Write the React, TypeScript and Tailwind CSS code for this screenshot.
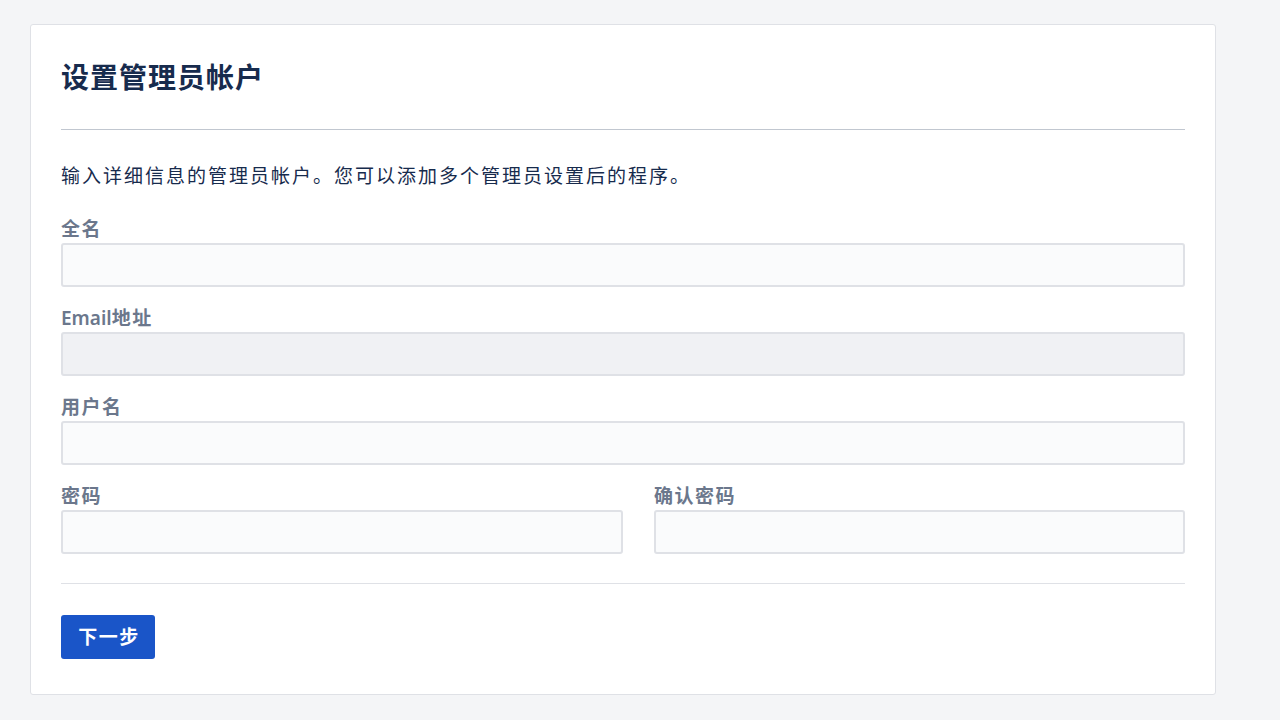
const FONT = {
  fontFamily:
    '-apple-system, "Noto Sans", "Noto Sans CJK SC", "Liberation Sans", sans-serif',
};

function Field({
  label,
  latin,
  disabled,
  className = "",
}: {
  label: string;
  latin?: string;
  disabled?: boolean;
  className?: string;
}) {
  return (
    <div className={className}>
      <label className="block text-[19px] font-semibold leading-6 tracking-[1.5px] text-[#6b778c]">
        {latin && <span className="tracking-normal">{latin}</span>}
        {label}
      </label>
      <input
        type="text"
        disabled={disabled}
        className={
          "mt-0.5 block h-[44px] w-full rounded-[3px] border-2 border-[#dfe1e6] outline-none " +
          (disabled ? "bg-[#f0f1f4]" : "bg-[#fafbfc]")
        }
      />
    </div>
  );
}

export default function App() {
  return (
    <div className="min-h-[720px] bg-[#f4f5f7] pl-[30px] pr-[64px] pt-[24px]" style={FONT}>
      <div className="w-[1186px] rounded-[3px] border border-[#dfe1e6] bg-white px-[30px] pb-[35px] pt-[28px]">
        <h1 className="text-[28px] font-bold leading-[48px] tracking-[1px] text-[#172b4d]">
          设置管理员帐户
        </h1>
        <div className="mt-[28px] h-px bg-[#c1c7d0]" />

        <p className="mt-[34px] text-[19px] leading-6 tracking-[2px] text-[#172b4d]">
          输入详细信息的管理员帐户。您可以添加多个管理员设置后的程序。
        </p>

        <Field label="全名" className="mt-[29px]" />
        <Field latin="Email" label="地址" disabled className="mt-[19px]" />
        <Field label="用户名" className="mt-[19px]" />

        <div className="mt-[19px] grid grid-cols-2">
          <Field label="密码" />
          <Field label="确认密码" className="pl-[31px]" />
        </div>

        <div className="mt-[29px] h-px bg-[#dfe1e6]" />

        <button className="mt-[31px] h-[44px] w-[94px] rounded-[3px] bg-[#1a55c8] pl-[2px] text-[19px] font-bold tracking-[1.5px] text-white">
          下一步
        </button>
      </div>
    </div>
  );
}
